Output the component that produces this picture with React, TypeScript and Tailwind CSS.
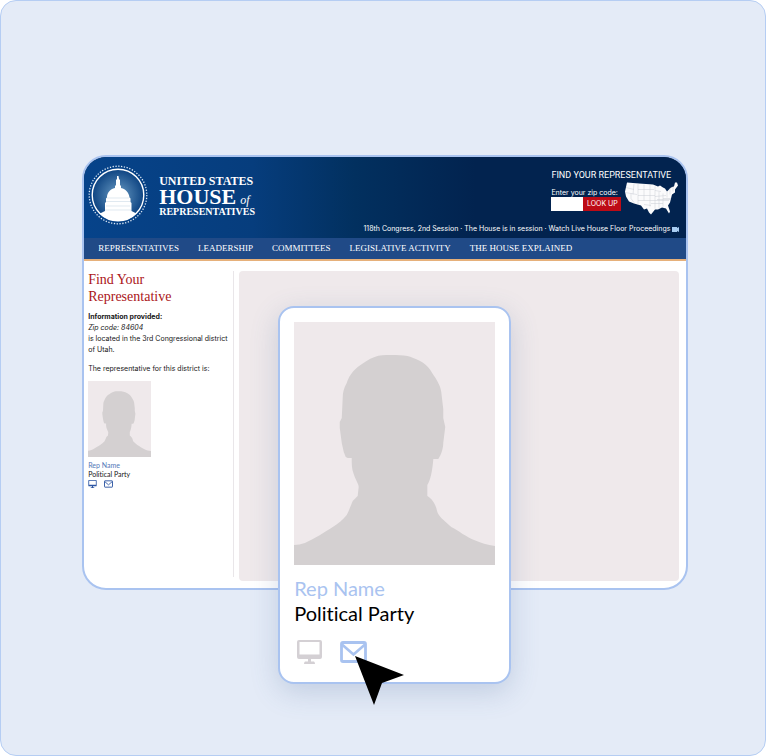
const navLinks = [
  "REPRESENTATIVES",
  "LEADERSHIP",
  "COMMITTEES",
  "LEGISLATIVE ACTIVITY",
  "THE HOUSE EXPLAINED",
];

const Portrait = ({ className }: { className: string }) => (
  <svg viewBox="0 0 202 243" preserveAspectRatio="none" className={className} role="img" aria-label="Portrait">
    <path fill="#efe9eb" d="M0 0h202v243H0z" />
    <path
      fill="#d4d0d1"
      d="M98 33C91 33 86 33 81 35C75 37 70 41 64 45C58 50 55 55 53 61C50 66 49 71 49 75L48 96L46 100V106L48 121L50 130L52 135L54 136H58C58 142 58 147 60 152C62 158 65 162 65 165L64 174L59 179C57 184 55 189 53 193C49 198 44 202 39 205C31 210 20 217 11 221C7 222 4 223 0 223V243H202V224C194 223 188 221 181 218C173 215 166 209 158 205L148 196C144 191 144 190 143 186C142 182 138 176 134 174V163C137 158 139 150 140 137H145C148 133 150 126 150 121L152 105L150 96V87L148 70C147 62 142 56 137 48C132 40 121 36 114 34C109 33 104 33 98 33Z"
    />
  </svg>
);

const MailIcon = ({ className }: { className: string }) => (
  <svg viewBox="0 0 27 22" fill="none" stroke="currentColor" className={className}>
    <rect x="1.5" y="1.5" width="24" height="19" rx="1.5" strokeWidth="2.8" />
    <path d="M2 3.5L13.5 13.5L25 3.5" strokeWidth="2.6" />
  </svg>
);

const MonitorIcon = ({ className }: { className: string }) => (
  <svg viewBox="0 0 25 24" className={className}>
    <path
      fill="currentColor"
      fillRule="evenodd"
      d="M2 0H23Q25 0 25 2V17Q25 19 23 19H14V21.500H17Q18 22 18 24H7Q7 22 8 21.500H11V19H2Q0 19 0 17V2Q0 0 2 0ZM2.500 2V14.500H22.500V2Z"
    />
  </svg>
);

const CapitolSeal = () => (
  <svg viewBox="0 0 60 60" className="size-15">
    <defs>
      <radialGradient id="seal">
        <stop offset="0" stopColor="#6a9cc4" />
        <stop offset="1" stopColor="#0e4482" />
      </radialGradient>
      <clipPath id="disc">
        <circle cx="30" cy="30" r="26" />
      </clipPath>
    </defs>
    <circle cx="30" cy="30" r="28.800" fill="none" stroke="#dce8f5" strokeWidth="1.300" strokeDasharray="1.300 1.527" />
    <circle cx="30" cy="30" r="25.800" fill="url(#seal)" stroke="#fff" strokeWidth="1.400" />
    <g clipPath="url(#disc)" fill="#fff">
      <path d="M29 11h1.500l.5 3 1 1v5l1 1v2c5 1 8 5 8.500 9.500l1 1V37l1 1v8l4 2c2 .5 3 .5 5 0L56 58H4l3-10c2 .5 4 .5 6 0l4-2v-8l1-1v-3.500l1-1c0-4.500 3-8.500 8-9.500v-2l1-1v-5l1-1z" />
      <path d="M19 33h22M18 36.500h24M18 41h24M17 45h26" stroke="#d3dfea" strokeWidth=".7" />
    </g>
  </svg>
);

const UsMap = () => (
  <svg viewBox="0 0 54 33" className="h-[34px] w-[54px] shrink-0">
    <path
      fill="#fbfbfc"
      d="M3 1L15 2L29 3L34 5L36 4L39 6L41 7L43 10L47 6L50 5L51 1L53 1L54 4L51 8L51 11L48 13L47 17L46 21L44 24L46 30L45 32L42 27L38 26L34 28L31 28L27 33L25 31L23 27L20 28L17 24L10 22L5 20L2 15L1 10Z"
    />
    <path
      fill="none"
      stroke="#c9ccd4"
      strokeWidth=".5"
      d="M2 6L10 8M1 11L13 13M10 2L9 13M14 2V23M7 12L7 17L10 21M14 8H30M14 14H31M14 19H45M20 3V19M20 23L27 24M26 3V25M31 5V27M31 9L37 10M31 15L42 14M35 10V27M39 12V25M27 22H39M39 17H47M43 10V16M46 7V13M49 5V10M33 18H46"
    />
  </svg>
);

const SiteHeader = () => (
  <header className="text-white">
    <div className="flex h-[81px] justify-between bg-[#02234f] bg-[linear-gradient(to_right,#06438a_0%,#063d7d_28%,#02305f_45%,#02234f_65%)] pl-1">
      <div className="flex gap-[11px] pt-2">
        <CapitolSeal />
        <div className="pt-[10px] font-['Liberation_Serif',serif] font-bold leading-none">
          <div className="text-[12px] leading-3">UNITED STATES</div>
          <div className="flex items-baseline gap-1 text-[22px] leading-5">
            HOUSE <span className="text-xs font-normal italic leading-3">of</span>
          </div>
          <div className="text-[10px] leading-[10px]">REPRESENTATIVES</div>
        </div>
      </div>
      <div className="flex flex-col items-end justify-between pb-[3px] pr-[7px] pt-3 font-['Inter',sans-serif]">
        <form className="w-[128px]" onSubmit={(e) => e.preventDefault()}>
          <div className="whitespace-nowrap text-[9px] leading-3 font-['Roboto',sans-serif]">FIND YOUR REPRESENTATIVE</div>
          <div className="flex">
            <div className="w-[73px] shrink-0 pt-2">
              <label htmlFor="zip" className="block whitespace-nowrap text-[7px] leading-2">
                Enter your zip code:
              </label>
              <div className="flex h-[14px]">
                <input id="zip" className="w-8 bg-white text-[8px] text-black" />
                <button className="w-[38px] shrink-0 whitespace-nowrap bg-[#bd0b16] text-[7px] leading-3">LOOK UP</button>
              </div>
            </div>
            <UsMap />
          </div>
        </form>
        <div className="flex items-center gap-[2px] text-[7px] leading-3">
          <span>118th Congress, 2nd Session · The House is in session · Watch Live House Floor Proceedings</span>
          <svg viewBox="0 0 7 5" className="h-[5px] w-[7px]">
            <path fill="#a9cdf2" d="M0 0h5v1l2-1v5l-2-1v1H0z" />
          </svg>
        </div>
      </div>
    </div>
    <nav className="flex h-[23px] items-center gap-[19px] border-b-2 border-[#e6b07a] bg-[#204a87] pl-[14px] font-['Liberation_Serif',serif] text-[9px]">
      {navLinks.map((link) => (
        <a key={link} href="#">
          {link}
        </a>
      ))}
    </nav>
  </header>
);

const Sidebar = () => (
  <aside className="w-[149px] shrink-0 pl-1 font-['Inter',sans-serif] text-[7px] leading-[11px] text-[#161616]">
    <h1 className="font-['Liberation_Serif',serif] text-sm leading-[17px] text-[#ab1519]">
      Find Your
      <br />
      Representative
    </h1>
    <div className="mt-[6px] font-bold">Information provided:</div>
    <div className="italic">Zip code: 84604</div>
    <p className="w-[140px]">is located in the 3rd Congressional district of Utah.</p>
    <p className="mt-2">The representative for this district is:</p>
    <Portrait className="mt-[7px] h-[76px] w-[63px]" />
    <div className="mt-1 font-['Lato',sans-serif] leading-[9px] [font-variant-ligatures:none]">
      <a href="#" className="block text-[#5478b8]">
        Rep Name
      </a>
      <div>Political Party</div>
    </div>
    <div className="mt-px flex gap-[7px] text-[#2d56a3]">
      <MonitorIcon className="h-2 w-[9px]" />
      <MailIcon className="h-2 w-[9px]" />
    </div>
  </aside>
);

const RepCard = () => (
  <div className="absolute left-[196px] top-[151px] w-[233px] rounded-2xl border-2 border-[#a9c3f0] bg-white px-[14px] pb-[18px] pt-[14px] shadow-[0_8px_28px_rgba(70,100,150,0.22)]">
    <Portrait className="h-[243px] w-full" />
    <div className="mt-[11px] font-['Lato',sans-serif] text-xl leading-[25px] [font-variant-ligatures:none]">
      <a href="#" className="block text-[#a9c3f0]">
        Rep Name
      </a>
      <div className="text-black">Political Party</div>
    </div>
    <div className="mt-[14px] flex gap-[18px] pl-[3px]">
      <button aria-label="Website" className="text-[#d4d0d4]">
        <MonitorIcon className="h-6 w-[25px]" />
      </button>
      <button aria-label="Email" className="text-[#a9c3f0]">
        <MailIcon className="h-[22px] w-[27px]" />
      </button>
    </div>
    <svg viewBox="0 0 50 50" className="absolute left-[75px] top-[348px] size-[50px]">
      <path fill="#000" d="M0 0L49 19L27 27L19 49Z" />
    </svg>
  </div>
);

export default function App() {
  return (
    <div className="min-h-screen rounded-2xl border border-[#b5cdf3] bg-[#e4ebf7] pl-[10.6%] pr-[10%] pt-[154px] font-['Liberation_Sans',sans-serif]">
      <div className="relative">
        <div className="overflow-hidden rounded-3xl border-2 border-[#a9c3f0] bg-white">
          <SiteHeader />
          <main className="flex pb-[7px] pr-[7px] pt-[10px]">
            <Sidebar />
            <div className="mb-1 mr-[5px] w-px bg-[#e9e6e9]" />
            <div className="h-[310px] flex-1 rounded-sm bg-[#efe9eb]" />
          </main>
        </div>
        <RepCard />
      </div>
    </div>
  );
}
